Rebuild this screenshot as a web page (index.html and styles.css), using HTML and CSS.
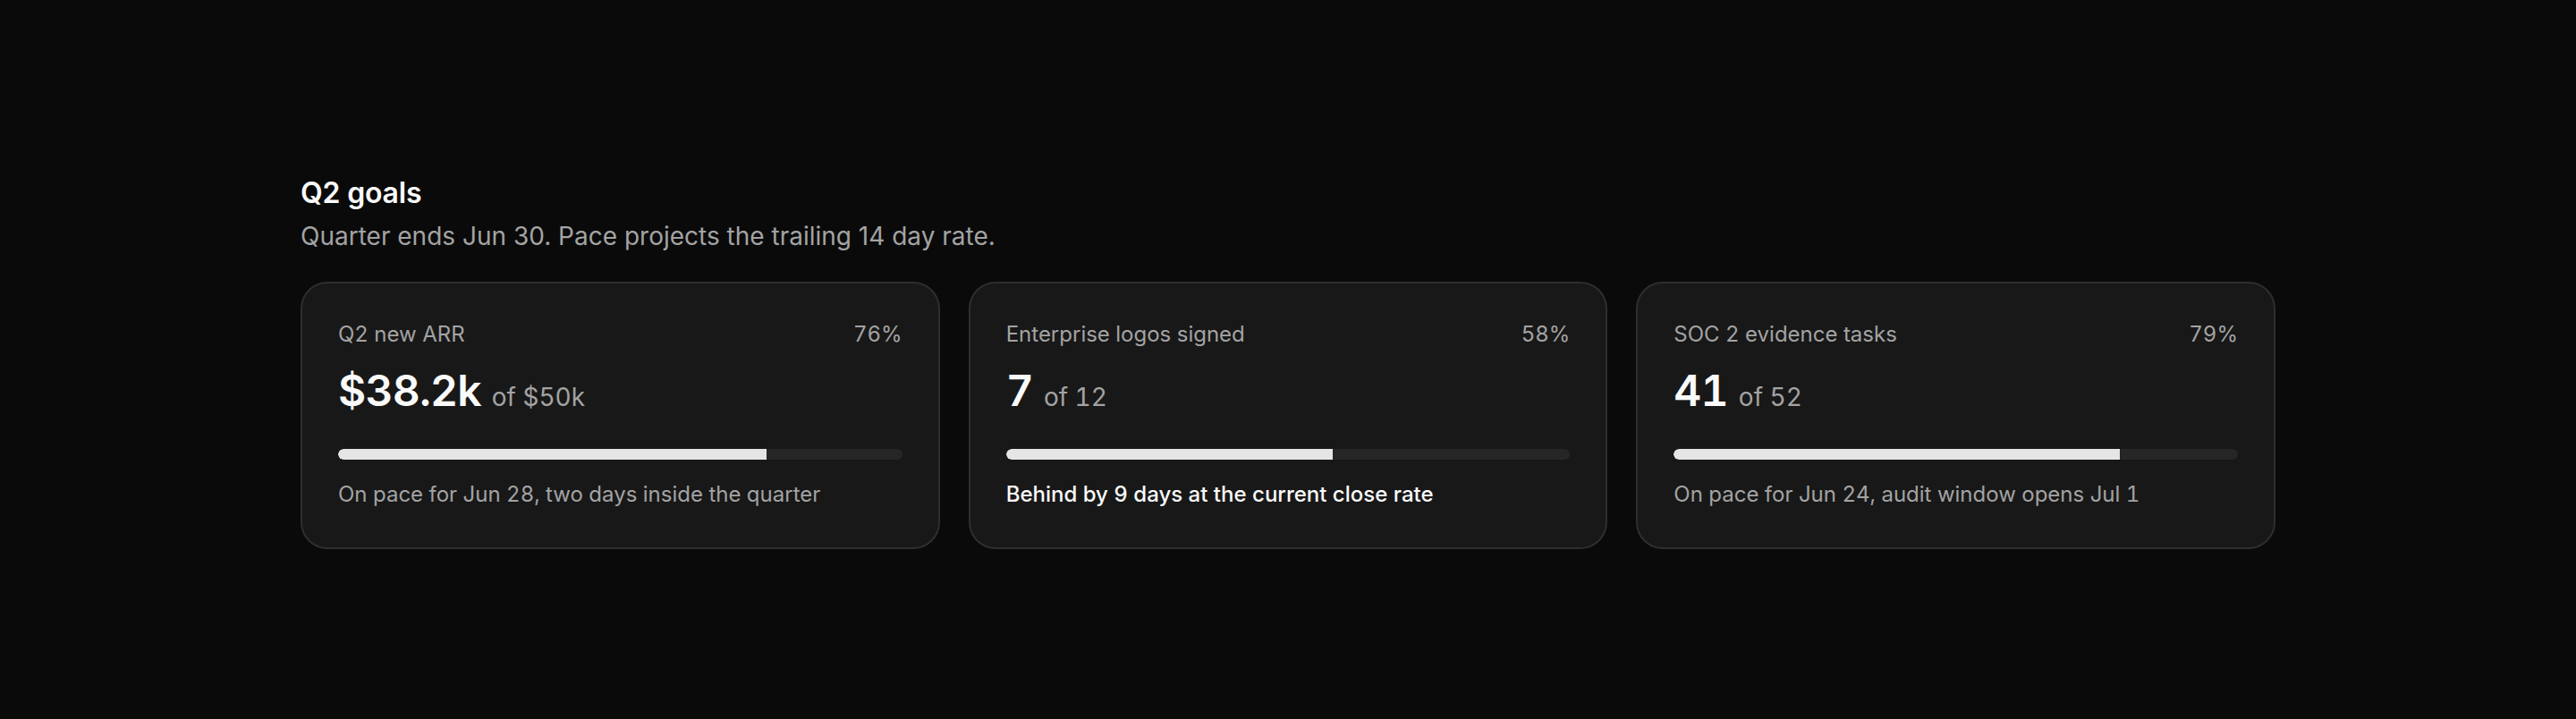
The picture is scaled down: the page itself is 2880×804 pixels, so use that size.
FILE: index.html
```html
<!DOCTYPE html>
<html lang="en">
<head>
<meta charset="utf-8">
<title>Q2 goals</title>
<link rel="stylesheet" href="styles.css">
</head>
<body>
<main class="goals">
  <header class="goals-head">
    <h1 class="goals-title">Q2 goals</h1>
    <p class="goals-sub">Quarter ends Jun 30. Pace projects the trailing 14 day rate.</p>
  </header>
  <section class="cards">
    <article class="card">
      <div class="card-top"><span class="card-label">Q2 new ARR</span><span class="card-pct">76%</span></div>
      <div class="card-value"><span class="value-main">$38.2k</span><span class="value-of">of $50k</span></div>
      <div class="bar"><div class="bar-fill" style="width:76%"></div></div>
      <p class="card-note">On pace for Jun 28, two days inside the quarter</p>
    </article>
    <article class="card">
      <div class="card-top"><span class="card-label">Enterprise logos signed</span><span class="card-pct">58%</span></div>
      <div class="card-value"><span class="value-main">7</span><span class="value-of">of 12</span></div>
      <div class="bar"><div class="bar-fill" style="width:58%"></div></div>
      <p class="card-note card-note--alert">Behind by 9 days at the current close rate</p>
    </article>
    <article class="card">
      <div class="card-top"><span class="card-label">SOC 2 evidence tasks</span><span class="card-pct">79%</span></div>
      <div class="card-value"><span class="value-main">41</span><span class="value-of">of 52</span></div>
      <div class="bar"><div class="bar-fill" style="width:79%"></div></div>
      <p class="card-note">On pace for Jun 24, audit window opens Jul 1</p>
    </article>
  </section>
</main>
</body>
</html>
```
FILE: styles.css
```css
* { box-sizing: border-box; }
html, body { margin: 0; padding: 0; }
body {
  background: #0a0a0a;
  color: #fafafa;
  font-family: Inter, "Noto Sans", "Liberation Sans", sans-serif;
  min-height: 100vh;
}
.goals {
  max-width: 2208px;
  margin: 0 auto;
  padding-top: 196px;
}
.goals-title {
  margin: 0;
  font-size: 32px;
  line-height: 40px;
  font-weight: 600;
  color: #fafafa;
  letter-spacing: -0.2px;
}
.goals-sub {
  margin: 8px 0 0;
  font-size: 28px;
  line-height: 40px;
  color: #a3a3a3;
}
.cards {
  margin-top: 31px;
  display: grid;
  grid-template-columns: repeat(3, 1fr);
  gap: 32px;
}
.card {
  background: #181818;
  border: 2px solid #2e2e2e;
  border-radius: 30px;
  padding: 42px 40px 44px;
  font-variant-numeric: tabular-nums;
}
.card-top {
  display: flex;
  justify-content: space-between;
  font-size: 24px;
  line-height: 30px;
  color: #a3a3a3;
}
.card-value {
  margin-top: 20px;
  height: 56px;
  display: flex;
  align-items: baseline;
  gap: 12px;
}
.value-main {
  font-size: 48px;
  line-height: 56px;
  font-weight: 600;
  color: #fafafa;
  letter-spacing: -0.8px;
}
.value-of {
  font-size: 28px;
  line-height: 40px;
  color: #a3a3a3;
}
.bar {
  margin-top: 37px;
  height: 12px;
  border-radius: 6px;
  background: #262626;
  overflow: hidden;
}
.bar-fill {
  height: 100%;
  background: #e5e5e5;
  border-radius: 6px 0 0 6px;
}
.card-note {
  margin: 24px 0 0;
  font-size: 24px;
  line-height: 30px;
  color: #a3a3a3;
}
.card-note--alert {
  color: #fafafa;
  font-weight: 500;
}
```
